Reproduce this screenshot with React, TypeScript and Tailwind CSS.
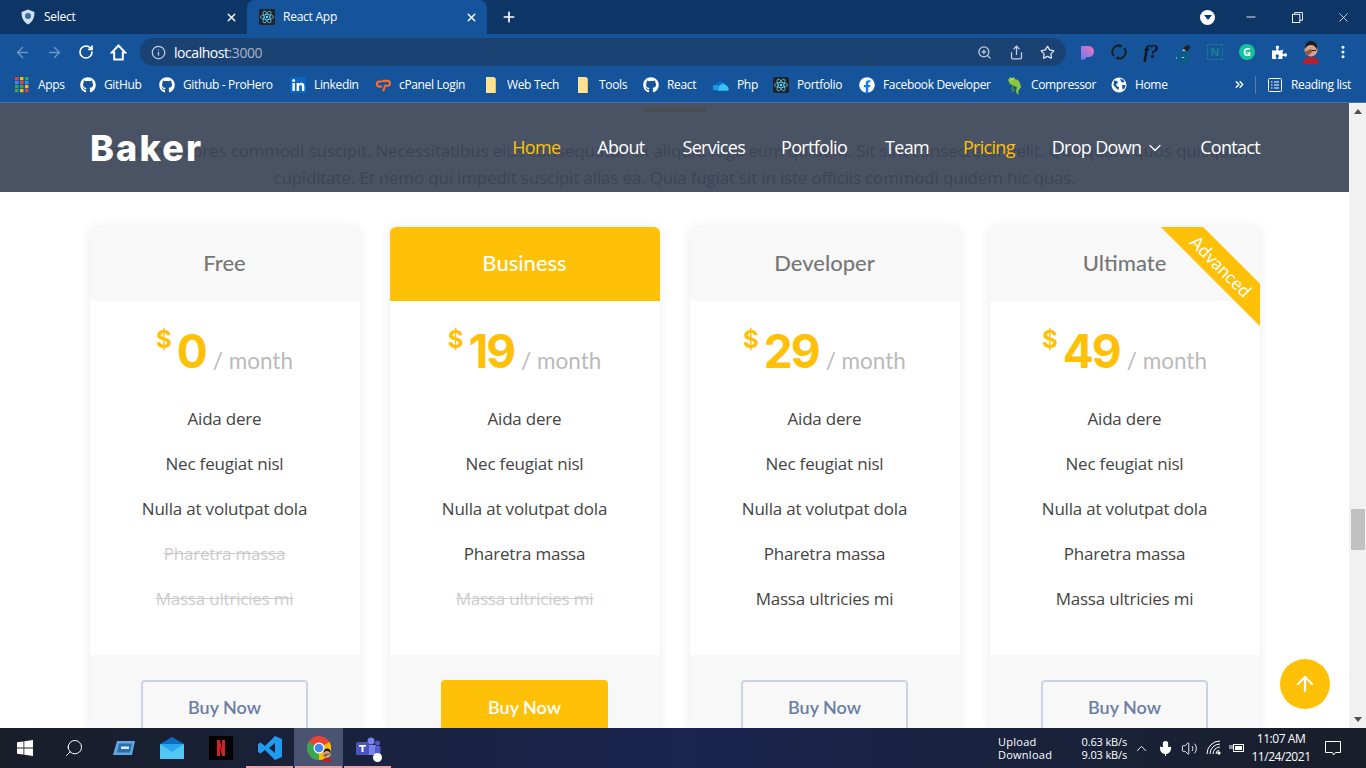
import React from "react";
import { ArrowLeft, ArrowRight, RotateCw, Info, ZoomIn, Share, Star, MoreVertical, X, Plus, Minus, ChevronDown, ChevronUp, ArrowUp, Mic, Volume2, Search, ChevronsRight } from "lucide-react";
import { FaGithub, FaFacebook, FaPuzzlePiece } from "react-icons/fa";

const ReactLogo = () => (
  <svg viewBox="0 0 18 18" className="w-4 h-4 shrink-0">
    <rect width="18" height="18" rx="2" fill="#20232a" />
    <g fill="none" stroke="#61dafb" strokeWidth="0.8">
      <ellipse cx="9" cy="9" rx="7.4" ry="2.9" />
      <ellipse cx="9" cy="9" rx="7.4" ry="2.9" transform="rotate(60 9 9)" />
      <ellipse cx="9" cy="9" rx="7.4" ry="2.9" transform="rotate(120 9 9)" />
    </g>
    <circle cx="9" cy="9" r="1.4" fill="#61dafb" />
  </svg>
);

const Folder = () => (
  <svg viewBox="0 0 16 16" className="w-4 h-4 shrink-0">
    <path d="M3 0h8l2 2v14H3z" fill="#fde293" />
    <path d="M11 0l2 2v14h-1V2z" fill="#e8c15a" />
  </svg>
);

const Apps = () => (
  <svg viewBox="0 0 14 16" className="w-[14px] h-4 shrink-0">
    {[0, 5, 10].map((x, c) =>
      [0, 4, 8, 12].map((y, r) => (
        <rect key={`${x}-${y}`} x={x} y={y} width="3.4" height="3.2" fill={r === 0 ? (c === 0 ? "#ea4335" : c === 1 ? "#fbbc04" : "#34a853") : r === 1 ? (c === 1 ? "#ea4335" : "#4285f4") : r === 2 ? (c === 2 ? "#fbbc04" : "#34a853") : c === 0 ? "#34a853" : c === 1 ? "#fbbc04" : "#ea4335"} />
      ))
    )}
  </svg>
);

const Linkedin = () => (
  <svg viewBox="0 0 16 16" className="w-4 h-4 shrink-0">
    <rect width="16" height="16" fill="#0a66c2" />
    <rect x="2.4" y="6" width="2.5" height="8" fill="#fff" />
    <circle cx="3.6" cy="3.6" r="1.5" fill="#fff" />
    <path d="M6.6 6h2.4v1.1C9.500 6.300 10.400 5.800 11.500 5.800c2 0 2.900 1.200 2.900 3.500V14h-2.500V9.800c0-1.100-.4-1.800-1.300-1.800-1 0-1.500.7-1.500 1.900V14H6.600z" fill="#fff" />
  </svg>
);

const CPanel = () => (
  <svg viewBox="0 0 18 16" className="w-4 h-4 shrink-0">
    <path d="M8 3H5a4 4 0 0 0 0 8h2.500l.8-2.300H5a1.700 1.700 0 0 1 0-3.400h2.200z" fill="#ff6c2c" />
    <path d="M8.500 2H14a4 4 0 0 1 0 8h-2l-1.500 5H8l2.500-7.300H14a1.500 1.500 0 0 0 0-3.200H7.800z" fill="#ff6c2c" />
  </svg>
);

const Cloud = () => (
  <svg viewBox="0 0 18 16" className="w-4 h-4 shrink-0">
    <path d="M4 8a4.500 4.500 0 0 1 8-2.500A4 4 0 0 0 7 9z" fill="#0a6fd0" />
    <path d="M1 14a3 3 0 0 1 1-6l2-.5L7 9a4 4 0 0 1 5-3l5 4-3 4z" fill="#1a9be6" />
    <path d="M6 14.500h10a2.500 2.500 0 0 0 .5-4.500L12 6.500 7 9z" fill="#37c4f5" />
  </svg>
);

const Chameleon = () => (
  <svg viewBox="0 0 16 18" className="w-4 h-[18px] shrink-0">
    <path d="M1 4l2-3 2 1 2-1 1 2 3 1 2 3 1 4-2 3-1 2 1 2-2 0-1-3 1-4-3-1-4-2z" fill="#8cc63f" />
    <path d="M6 9l-1 4 2 1-2 2" stroke="#5a9a20" strokeWidth="1.200" fill="none" />
    <circle cx="5" cy="3.500" r="1" fill="#f5d949" />
  </svg>
);

const Globe = () => (
  <svg viewBox="0 0 16 16" className="w-4 h-4 shrink-0">
    <circle cx="8" cy="8" r="7.500" fill="#fff" />
    <path d="M3 3.500l3 .5 1 2-2 1 1 2.500 2 .5-.5 3L5 11 2.500 8zM9.500 1.500l3 1.500 1 2-2.500.5-1.500-2zM11 8h3.500l-1 3.500-2 1z" fill="#15549b" />
  </svg>
);

const Bm = ({ w, icon, label }: { w: string; icon: React.ReactNode; label: string }) => (
  <div className={`flex items-center gap-[8px] shrink-0 ${w}`}>
    <span className="w-4 flex justify-center shrink-0">{icon}</span>
    <span className="text-[12px] tracking-[-0.35px] whitespace-nowrap">{label}</span>
  </div>
);

const Avatar = ({ small }: { small?: boolean }) => (
  <svg viewBox="0 0 20 24" className={small ? "w-3 h-[14px]" : "w-5 h-6"}>
    <path d="M2 24c0-5 3-7 8-7s8 2 8 7z" fill="#b3202e" />
    <circle cx="10" cy="10" r="6.500" fill="#d9a48c" />
    <path d="M4 9c0-6 3-8 6-8s7 2 6 9c-1-3-3-5-6-5S6 6 4 9z" fill="#1d1d1d" />
    <path d="M3 12l7-3 2 2-5 5z" fill="#8d5a48" />
    <rect x="11" y="10" width="4" height="1" fill="#222" />
  </svg>
);

const Toolbar = () => (
  <>
    <div className="h-[34px] bg-[#0d3666] flex items-end text-white shrink-0">
      <div className="w-[247px] h-[34px] flex items-center pl-[20px] pr-[9px]">
        <svg viewBox="0 0 16 16" className="w-4 h-4 shrink-0">
          <path d="M8 0.500l6.500 2.500c0 6-2 10-6.500 12.500C3.500 13 1.500 9 1.500 3z" fill="#cfe0ee" />
          <circle cx="8" cy="7" r="3" fill="#3a6f9f" />
        </svg>
        <span className="ml-2 text-[12px] tracking-[-0.25px] flex-1">Select</span>
        <X size={13} strokeWidth={2.5} />
      </div>
      <div className="w-[240px] h-[34px] bg-[#15549b] rounded-t-[8px] flex items-center pl-[12px] pr-[9px]">
        <ReactLogo />
        <span className="ml-2 text-[12px] tracking-[-0.25px] flex-1">React App</span>
        <X size={13} strokeWidth={2.5} />
      </div>
      <div className="h-[34px] flex items-center ml-[14px]">
        <Plus size={16} strokeWidth={2.5} />
      </div>
      <div className="flex-1" />
      <div className="h-[34px] flex items-center">
        <span className="w-[15px] h-[15px] rounded-full bg-white flex items-center justify-center mr-[29px]">
          <span className="w-0 h-0 border-l-[4px] border-r-[4px] border-t-[5px] border-l-transparent border-r-transparent border-t-[#0d3666]" />
        </span>
        <Minus size={14} strokeWidth={1.5} className="mr-[34px]" />
        <svg viewBox="0 0 12 12" className="w-[11px] h-[11px] mr-[33px]" fill="none" stroke="#fff">
          <rect x="0.500" y="2.500" width="8" height="9" />
          <path d="M3 2.500V.500h8.500v8.500H8.500" />
        </svg>
        <X size={15} strokeWidth={1.2} className="mr-[15px]" />
      </div>
    </div>
    <div className="h-[34px] bg-[#15549b] flex items-center text-white shrink-0 pl-[14px] pt-[2px]">
      <ArrowLeft size={17} className="text-[#6d95c6] mr-[15px] shrink-0" />
      <ArrowRight size={17} className="text-[#6d95c6] mr-[15px] shrink-0" />
      <RotateCw size={16} strokeWidth={2.500} className="mr-[16px] shrink-0" />
      <svg viewBox="0 0 17 17" className="w-[17px] h-[17px] mr-[13px] shrink-0" fill="none" stroke="#fff" strokeWidth="2">
        <path d="M8.500 1.500L1.800 8.500h2.400v7h8.600v-7h2.400z" strokeLinejoin="miter" />
      </svg>
      <div className="w-[926px] h-[28px] bg-[#1a4374] rounded-full flex items-center pl-[11px] pr-[10px] shrink-0">
        <Info size={15} className="text-[#c5cedb] shrink-0" />
        <span className="ml-[8px] text-[14px] tracking-[-0.45px]">
          localhost<span className="text-[#a6b4c8]">:3000</span>
        </span>
        <span className="flex-1" />
        <ZoomIn size={15} className="text-[#c5cedb] mr-[17px]" />
        <Share size={15} className="text-[#c5cedb] mr-[16px]" />
        <Star size={15} className="text-[#dfe5ee] mr-[1px]" />
      </div>
      <div className="flex items-center ml-[5px] shrink-0">
        <span className="w-[32px] flex justify-center">
          <svg viewBox="0 0 16 16" className="w-4 h-4">
            <defs>
              <linearGradient id="pg" x1="1" y1="0" x2="0" y2="1">
                <stop offset="0" stopColor="#f472b6" />
                <stop offset="1" stopColor="#6d7cf6" />
              </linearGradient>
            </defs>
            <path d="M2 2h7.500a5.500 5.500 0 0 1 0 11H7a2.500 2.500 0 0 1-2.500 2.500H2z" fill="url(#pg)" />
          </svg>
        </span>
        <span className="w-[32px] flex justify-center">
          <svg viewBox="0 0 16 16" className="w-4 h-4" fill="none" stroke="#1a1a1a" strokeWidth="1.800">
            <path d="M3 12A6.200 6.200 0 0 1 10 2.100M13 4a6.200 6.200 0 0 1-7 9.900" />
            <path d="M8.500 0l3 2-3 2zM7.500 12l-3 2 3 2z" fill="#1a1a1a" stroke="none" />
          </svg>
        </span>
        <span className="w-[32px] text-center text-[#0c1320] text-[18px] font-bold italic font-['Liberation_Serif',serif] leading-none">f?</span>
        <span className="w-[32px] flex justify-center relative">
          <svg viewBox="0 0 16 16" className="w-4 h-4">
            <path d="M1 15l1-3 7-7 2 2-7 7z" fill="#c7d3e2" />
            <path d="M8 4l5-3.500L15.500 3 12 8z" fill="#222" />
          </svg>
          <span className="absolute left-[10px] top-[7px] w-[12px] h-[13px] bg-[#0b5b8c] text-white text-[9px] leading-[12px] text-center">-</span>
        </span>
        <span className="w-[32px] flex justify-center">
          <span className="w-4 h-4 border border-dashed border-[#18808a] text-[#18808a] text-[11px] font-bold leading-[14px] text-center">N</span>
        </span>
        <span className="w-[32px] flex justify-center">
          <span className="w-4 h-4 rounded-full bg-[#15c39a] text-white text-[11px] font-bold leading-4 text-center">G</span>
        </span>
        <span className="w-[32px] flex justify-center"><FaPuzzlePiece size={15} /></span>
        <span className="w-[32px] flex justify-center"><Avatar /></span>
        <span className="w-[32px] flex justify-center"><MoreVertical size={16} strokeWidth={2.500} /></span>
      </div>
    </div>
    <div className="h-[35px] bg-[#15549b] border-b border-[#3f76b5] flex items-center text-white shrink-0 pl-[14px] pb-[1px]">
      <Bm w="w-[66px]" icon={<Apps />} label="Apps" />
      <Bm w="w-[79px]" icon={<FaGithub size={16} />} label="GitHub" />
      <Bm w="w-[131px]" icon={<FaGithub size={16} />} label="Github - ProHero" />
      <Bm w="w-[85px]" icon={<Linkedin />} label="Linkedin" />
      <Bm w="w-[108px]" icon={<CPanel />} label="cPanel Login" />
      <Bm w="w-[92px]" icon={<Folder />} label="Web Tech" />
      <Bm w="w-[68px]" icon={<Folder />} label="Tools" />
      <Bm w="w-[70px]" icon={<FaGithub size={16} />} label="React" />
      <Bm w="w-[60px]" icon={<Cloud />} label="Php" />
      <Bm w="w-[86px]" icon={<ReactLogo />} label="Portfolio" />
      <Bm w="w-[148px]" icon={<FaFacebook size={16} className="text-white bg-[#1877f2] rounded-full" />} label="Facebook Developer" />
      <Bm w="w-[104px]" icon={<Chameleon />} label="Compressor" />
      <Bm w="w-[122px]" icon={<Globe />} label="Home" />
      <ChevronsRight size={13} strokeWidth={2.500} className="shrink-0" />
      <span className="w-px h-[18px] bg-[#4d7fb8] ml-[9px] mr-[11px] shrink-0" />
      <svg viewBox="0 0 16 16" className="w-4 h-4 mr-[8px] shrink-0" fill="none" stroke="#fff">
        <rect x="1.500" y="1.500" width="13" height="13" rx="1" />
        <path d="M4 5h1.500M7 5h5M4 8h1.500M7 8h5M4 11h1.500M7 11h5" />
      </svg>
      <span className="text-[12px] tracking-[-0.35px] whitespace-nowrap">Reading list</span>
    </div>
  </>
);

const features = ["Aida dere", "Nec feugiat nisl", "Nulla at volutpat dola", "Pharetra massa", "Massa ultricies mi"];

const plans = [
  { name: "Free", price: "0", off: 2, featured: false, ribbon: false },
  { name: "Business", price: "19", off: 1, featured: true, ribbon: false },
  { name: "Developer", price: "29", off: 0, featured: false, ribbon: false },
  { name: "Ultimate", price: "49", off: 0, featured: false, ribbon: true },
];

const Card = ({ name, price, off, featured, ribbon }: (typeof plans)[number]) => (
  <div className="w-[270px] shrink-0 rounded-[6px] overflow-hidden bg-white shadow-[0_0_12px_rgba(0,0,0,0.08)] relative">
    {ribbon && (
      <div className="absolute left-[131px] top-[24px] w-[200px] h-[30px] rotate-45 bg-[#ffc107] text-white text-[18px] text-center leading-[30px] font-['Lato',sans-serif]">
        Advanced
      </div>
    )}
    <div className={`h-[74px] pb-[3px] flex items-center justify-center text-[22px] font-medium font-['Lato',sans-serif] ${featured ? "bg-[#ffc107] text-white" : "bg-[#f8f8f8] text-[#777777]"}`}>
      {name}
    </div>
    <div className="h-[354px] flex flex-col items-center">
      <div className="h-[95px] flex items-start justify-center pt-[22px] text-[#ffc107] font-['Inter',sans-serif] font-bold">
        <span className="text-[24px] leading-[34px] mr-[5px]">$</span>
        <span className="text-[46px] leading-[56px] tracking-[-2px]">{price}</span>
        <span className="text-[22.5px] leading-[75px] font-normal font-['Lato',sans-serif] text-[#bababa] ml-[7px] whitespace-pre">/ month</span>
      </div>
      {features.map((f, i) => (
        <div key={f} className={`h-[45px] flex items-center text-[17px] tracking-[-0.2px] font-['Open_Sans',sans-serif] ${i >= features.length - off ? "text-[#cccccc] line-through" : "text-[#444444]"}`}>
          {f}
        </div>
      ))}
    </div>
    <div className="h-[80px] bg-[#f8f8f8] pt-[25px] flex justify-center">
      <div className={`w-[167px] h-[54px] rounded-[4px] flex items-center justify-center text-[18px] font-semibold font-['Lato',sans-serif] ${featured ? "bg-[#ffc107] text-white" : "border-2 border-[#ccd3e2] text-[#6a7ea5]"}`}>
        Buy Now
      </div>
    </div>
  </div>
);

const Nav = () => (
  <div className="absolute top-0 left-0 right-0 h-[89px] bg-[rgba(59,68,87,0.92)] pl-[90px] pr-[89px] flex items-center justify-between">
    <span className="text-white text-[36px] font-extrabold tracking-[2.2px] font-['Inter',sans-serif] leading-none">Baker</span>
    <nav className="flex items-center text-[18px] tracking-[-0.7px] text-white font-['Open_Sans',sans-serif]">
      <span className="text-[#ffc107] mr-[37px]">Home</span>
      <span className="mr-[38px]">About</span>
      <span className="mr-[36px]">Services</span>
      <span className="mr-[38px]">Portfolio</span>
      <span className="mr-[34px]">Team</span>
      <span className="text-[#ffc107] mr-[37px]">Pricing</span>
      <span>Drop Down</span>
      <ChevronDown size={20} strokeWidth={1.500} className="ml-[4px] mr-[35px]" />
      <span>Contact</span>
    </nav>
  </div>
);

const Page = () => (
  <div className="flex-1 flex min-h-0">
    <div className="w-[1349px] relative overflow-hidden bg-white flex flex-col items-center">
      <div className="w-[63px] h-[4px] bg-[#ffc107] mt-[5px] shrink-0" />
      <p className="w-[1170px] mt-[25px] text-center text-[17px] tracking-[-0.17px] leading-[27px] text-[#444444] font-['Open_Sans',sans-serif] shrink-0">
        Magnam dolores commodi suscipit. Necessitatibus eius consequatur ex aliquid fuga eum quidem. Sit sint consectetur velit. Quisquam quos quisquam cupiditate. Et nemo qui impedit suscipit alias ea. Quia fugiat sit in iste officiis commodi quidem hic quas.
      </p>
      <div className="flex gap-[30px] mt-[36px] w-[1170px] shrink-0">
        {plans.map((p) => (
          <Card key={p.name} {...p} />
        ))}
      </div>
      <Nav />
      <div className="absolute left-[1280px] top-[556px] w-[50px] h-[50px] rounded-full bg-[#ffc107] flex items-center justify-center text-white">
        <ArrowUp size={24} strokeWidth={2.200} />
      </div>
    </div>
    <div className="w-[17px] bg-[#f1f1f1] flex flex-col items-center shrink-0">
      <span className="mt-[6px] w-0 h-0 border-l-[4px] border-r-[4px] border-b-[5px] border-l-transparent border-r-transparent border-b-[#505050]" />
      <div className="mt-[395px] w-[14px] h-[41px] bg-[#c1c1c1]" />
      <div className="flex-1" />
      <span className="mb-[6px] w-0 h-0 border-l-[4px] border-r-[4px] border-t-[5px] border-l-transparent border-r-transparent border-t-[#505050]" />
    </div>
  </div>
);

const TaskItem = ({ children, active, under }: { children: React.ReactNode; active?: boolean; under?: boolean }) => (
  <div className={`w-[49px] h-[40px] flex items-center justify-center relative ${active ? "bg-[#4a5470]" : ""}`}>
    {children}
    {under && <span className="absolute bottom-0 left-[1px] right-[1px] h-[2px] bg-[#f4a0a8]" />}
  </div>
);

const Taskbar = () => (
  <div className="h-[40px] shrink-0 bg-gradient-to-r from-[#191e29] via-[#1a2550] to-[#191e29] flex items-center text-white font-['Open_Sans',sans-serif]">
    <TaskItem>
      <svg viewBox="0 0 16 16" className="w-4 h-4" fill="#fff">
        <path d="M0 2.300l6.500-.9v6.200H0zM7.300 1.300L16 0v7.600H7.300zM0 8.400h6.500v6.200L0 13.700zM7.300 8.400H16V16l-8.700-1.200z" />
      </svg>
    </TaskItem>
    <TaskItem><Search size={20} strokeWidth={1.200} className="-scale-x-100" /></TaskItem>
    <TaskItem>
      <svg viewBox="0 0 24 16" className="w-6 h-4">
        <path d="M6 1h18l-3 14H2z" fill="#5fa8e0" />
        <path d="M8 3.500h13l-2 9H6z" fill="#2d6ea8" />
        <rect x="10" y="6.500" width="8" height="2.500" fill="#d9ecfb" />
      </svg>
    </TaskItem>
    <TaskItem>
      <svg viewBox="0 0 24 24" className="w-6 h-6">
        <path d="M0 8l12-7 12 7z" fill="#0a6cc0" />
        <path d="M0 8h24v15H0z" fill="#28a8ea" />
        <path d="M0 8l12 8 12-8v15H0z" fill="#50c8f5" />
      </svg>
    </TaskItem>
    <TaskItem>
      <svg viewBox="0 0 24 24" className="w-6 h-6">
        <rect width="24" height="24" fill="#000" />
        <path d="M8 4h3l2 9V4h3v16h-3l-2-9v9H8z" fill="#d81f26" />
      </svg>
    </TaskItem>
    <TaskItem under>
      <svg viewBox="0 0 24 24" className="w-6 h-6">
        <path d="M17 0l7 3v18l-7 3L7 14l-4.500 3.500L0 16V8l2.500-1.500L7 10zM17 7l-6 5 6 5z" fill="#1f9cf0" />
      </svg>
    </TaskItem>
    <TaskItem active under>
      <div className="relative w-6 h-6">
        <svg viewBox="0 0 24 24" className="w-6 h-6">
          <circle cx="12" cy="12" r="12" fill="#ea4335" />
          <path d="M12 12L1.600 18A12 12 0 0 1 1.600 6z" fill="#34a853" />
          <path d="M12 24A12 12 0 0 1 1.600 18L12 12l6 0z" fill="#34a853" />
          <path d="M12 12l10.400-6A12 12 0 0 1 12 24z" fill="#fbbc04" />
          <circle cx="12" cy="12" r="5.500" fill="#fff" />
          <circle cx="12" cy="12" r="4.300" fill="#4285f4" />
        </svg>
        <span className="absolute -right-[2px] -bottom-[2px]"><Avatar small /></span>
      </div>
    </TaskItem>
    <TaskItem under>
      <div className="relative">
        <svg viewBox="0 0 26 24" className="w-[26px] h-6">
          <circle cx="16" cy="5" r="3.500" fill="#7b83eb" />
          <circle cx="22.500" cy="7" r="2.500" fill="#5059c9" />
          <rect x="12" y="9" width="9" height="10" rx="1" fill="#7b83eb" />
          <rect x="20" y="10" width="5.500" height="8" rx="1.500" fill="#5059c9" />
          <rect x="1" y="6" width="13" height="13" rx="1.500" fill="#4b53bc" />
          <path d="M4 9h7v1.800H8.500V16h-2v-5.200H4z" fill="#fff" />
        </svg>
        <span className="absolute -right-[1px] bottom-[-2px] w-[9px] h-[9px] rounded-full bg-white" />
      </div>
    </TaskItem>
    <div className="flex-1" />
    <div className="text-[11px] leading-[13px] tracking-[0.25px] w-[72px]">
      <div>Upload</div>
      <div>Download</div>
    </div>
    <div className="text-[11px] leading-[13px] tracking-[-0.15px] w-[57px] text-right">
      <div>0.63 kB/s</div>
      <div>9.03 kB/s</div>
    </div>
    <ChevronUp size={17} strokeWidth={1.300} className="ml-[6px] mr-[7px]" />
    <Mic size={17} strokeWidth={1.500} fill="#fff" className="mr-[7px]" />
    <Volume2 size={17} strokeWidth={1.300} className="mr-[8px]" />
    <svg viewBox="0 0 16 16" className="w-4 h-4 mr-[7px]" fill="none" stroke="#fff" strokeWidth="1">
      <path d="M1 14A13 13 0 0 1 14 1M4 14A10 10 0 0 1 14 4M7 14a7 7 0 0 1 7-7M10 14a4 4 0 0 1 3-4" />
      <circle cx="13" cy="13" r="1.200" fill="#fff" />
    </svg>
    <svg viewBox="0 0 16 12" className="w-4 h-3 mr-[6px]" fill="none" stroke="#fff">
      <rect x="4.500" y="2.500" width="10" height="7" />
      <rect x="6" y="4" width="7" height="4" fill="#fff" stroke="none" />
      <path d="M0 6h4M1 3v2M3 3v2" />
    </svg>
    <div className="text-[12px] leading-[18px] text-center w-[60px] whitespace-nowrap tracking-[-0.45px] mr-[14px]">
      <div>11:07 AM</div>
      <div>11/24/2021</div>
    </div>
    <svg viewBox="0 0 16 16" className="w-4 h-4 mr-[25px]" fill="none" stroke="#fff">
      <path d="M.5 1.500h15v11h-5l-2 2.500-1-2.500H.5z" />
    </svg>
  </div>
);

export default function App() {
  return (
    <div className="w-[1366px] h-[768px] overflow-hidden flex flex-col font-['Open_Sans',sans-serif]">
      <Toolbar />
      <Page />
      <Taskbar />
    </div>
  );
}
